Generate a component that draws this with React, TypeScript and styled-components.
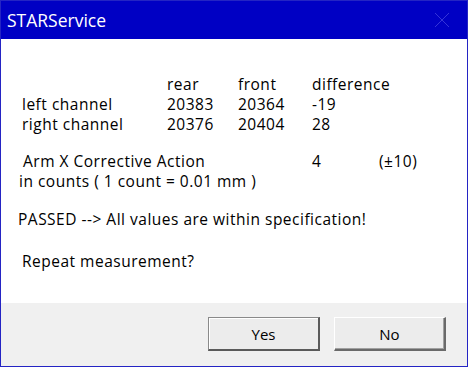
import React from "react"
import styled, { createGlobalStyle } from "styled-components"

const GlobalStyle = createGlobalStyle`
  html, body {
    margin: 0;
    padding: 0;
    background: #ffffff;
  }
  * {
    box-sizing: border-box;
  }
`

const Window = styled.div`
  width: 468px;
  height: 367px;
  display: flex;
  flex-direction: column;
  border: 1px solid #2424c4;
  background: #ffffff;
  font-family: "Open Sans", "Noto Sans", sans-serif;
  color: #000000;
  overflow: hidden;
`

const TitleBar = styled.div`
  height: 38px;
  flex: none;
  display: flex;
  align-items: center;
  justify-content: space-between;
  background: #0000c4;
  padding: 0 0 0 6px;
`

const Title = styled.span`
  color: #ffffff;
  font-size: 17.5px;
`

const CloseButton = styled.div`
  width: 50px;
  height: 38px;
  display: flex;
  align-items: center;
  justify-content: center;
`

const Content = styled.div`
  flex: 1;
  padding: 35px 0 0 0;
  font-size: 15.5px;
  line-height: 20px;
  letter-spacing: 0.5px;
`

const Table = styled.div`
  display: grid;
  grid-template-columns: 145px 71px 74px auto;
  padding-left: 21px;
`

const Line = styled.div<{ $indent: number; $top?: number }>`
  padding-left: ${p => p.$indent}px;
  margin-top: ${p => p.$top ?? 0}px;
  white-space: pre;
`

const ActionRow = styled.div`
  display: grid;
  grid-template-columns: 289px 67px auto;
  padding-left: 22px;
  margin-top: 17px;
`

const Footer = styled.div`
  height: 63px;
  flex: none;
  background: #f0f0f0;
  display: flex;
  justify-content: flex-end;
  align-items: flex-start;
  gap: 14px;
  padding: 14px 21px 0 0;
`

const Button = styled.button<{ $default?: boolean }>`
  width: 112px;
  height: 34px;
  font-family: "Open Sans", "Noto Sans", sans-serif;
  font-size: 15px;
  color: #000000;
  background: #ececec;
  border-style: solid;
  border-width: 1px 2px 2px 1px;
  border-color: ${p => (p.$default ? "#8a8a8a #5a5a5a #5a5a5a #8a8a8a" : "#ffffff #6a6a6a #6a6a6a #ffffff")};
  box-shadow: ${p => (p.$default ? "inset 1px 1px 0 #ffffff" : "inset -1px -1px 0 #a0a0a0")};
  padding: 0;
`

const rows = [
  { label: "left channel", rear: "20383", front: "20364", diff: "-19" },
  { label: "right channel", rear: "20376", front: "20404", diff: "28" },
]

export default function App() {
  return (
    <>
      <GlobalStyle />
      <Window>
        <TitleBar>
          <Title>STARService</Title>
          <CloseButton>
            <svg width="16" height="16" viewBox="0 0 16 16">
              <path d="M1 1 L15 15 M15 1 L1 15" stroke="#3434d8" strokeWidth="1" />
            </svg>
          </CloseButton>
        </TitleBar>
        <Content>
          <Table>
            <span />
            <span>rear</span>
            <span>front</span>
            <span>difference</span>
            {rows.map(r => (
              <React.Fragment key={r.label}>
                <span>{r.label}</span>
                <span>{r.rear}</span>
                <span>{r.front}</span>
                <span>{r.diff}</span>
              </React.Fragment>
            ))}
          </Table>
          <ActionRow>
            <span>Arm X Corrective Action</span>
            <span>4</span>
            <span>(±10)</span>
          </ActionRow>
          <Line $indent={18}>in counts ( 1 count = 0.01 mm )</Line>
          <Line $indent={17} $top={18}>PASSED --&gt; All values are within specification!</Line>
          <Line $indent={21} $top={22}>Repeat measurement?</Line>
        </Content>
        <Footer>
          <Button $default>Yes</Button>
          <Button>No</Button>
        </Footer>
      </Window>
    </>
  )
}
